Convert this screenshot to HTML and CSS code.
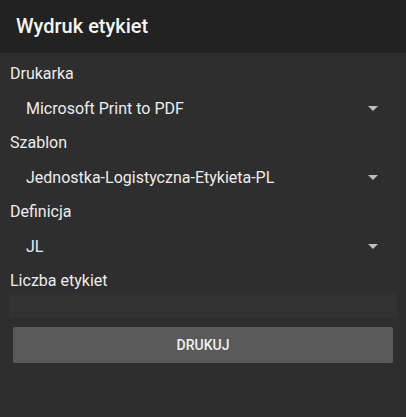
FILE: index.html
```html
<!DOCTYPE html>
<html lang="pl">
<head>
<meta charset="utf-8">
<title>Wydruk etykiet</title>
<link rel="stylesheet" href="styles.css">
</head>
<body>
<div class="app">
  <header class="header">Wydruk etykiet</header>
  <main class="content">
    <div class="field">
      <div class="label">Drukarka</div>
      <div class="select"><span class="value">Microsoft Print to PDF</span><span class="arrow"></span></div>
    </div>
    <div class="field">
      <div class="label">Szablon</div>
      <div class="select"><span class="value">Jednostka-Logistyczna-Etykieta-PL</span><span class="arrow"></span></div>
    </div>
    <div class="field">
      <div class="label">Definicja</div>
      <div class="select"><span class="value">JL</span><span class="arrow"></span></div>
    </div>
    <div class="field">
      <div class="label">Liczba etykiet</div>
      <div class="input"></div>
    </div>
    <button class="button">DRUKUJ</button>
  </main>
</div>
</body>
</html>
```
FILE: styles.css
```css
html, body {
  margin: 0;
  padding: 0;
  height: 100%;
}
body {
  background: #2e2e2e;
  font-family: Roboto, "Liberation Sans", sans-serif;
  color: #ececec;
}
.app {
  display: flex;
  flex-direction: column;
  min-height: 100%;
}
.header {
  height: 53px;
  line-height: 53px;
  background: #222222;
  color: #f5f5f5;
  font-size: 20px;
  font-weight: 500;
  padding-left: 16px;
}
.content {
  padding: 9px 10px 0 10px;
  display: flex;
  flex-direction: column;
}
.label {
  height: 24px;
  line-height: 24px;
  font-size: 16px;
  color: #ececec;
}
.select {
  height: 45px;
  display: flex;
  align-items: center;
  padding-left: 16px;
  padding-right: 18px;
  font-size: 16px;
  color: #ececec;
}
.value {
  flex: 1;
}
.arrow {
  width: 0;
  height: 0;
  border-left: 5px solid transparent;
  border-right: 5px solid transparent;
  border-top: 5px solid #bdbdbd;
  margin-top: -1px;
}
.input {
  height: 25px;
  margin: 0 -1px;
  background: #323232;
}
.button {
  margin: 9px 3px 0 3px;
  height: 36px;
  border: none;
  border-radius: 2px;
  background: #5a5a5a;
  color: #f0f0f0;
  font-family: Roboto, "Liberation Sans", sans-serif;
  font-size: 14px;
  font-weight: 500;
  padding: 0;
}
```
